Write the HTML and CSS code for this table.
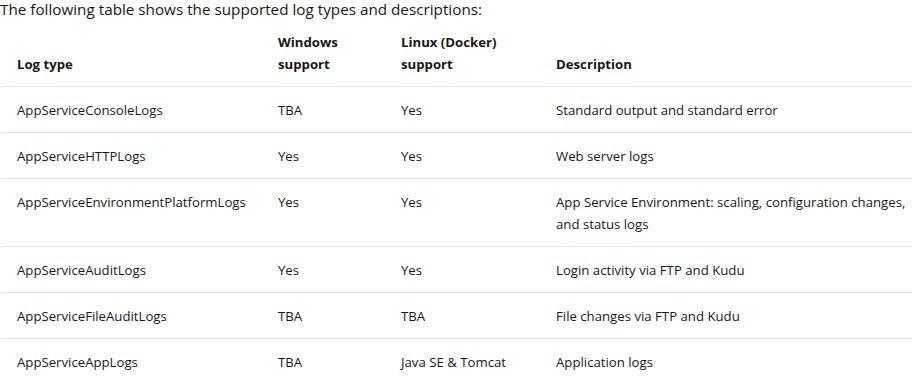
FILE: index.html
```html
<!DOCTYPE html>
<html lang="en">
<head>
    <meta charset="UTF-8">
    <meta name="viewport" content="width=device-width, initial-scale=1.0">
    <title>Log types</title>
    <link rel="stylesheet" href="styles.css">
</head>
<body>
    <p class="intro">The following table shows the supported log types and descriptions:</p>
    <table class="log-table">
        <colgroup>
            <col class="col-type">
            <col class="col-win">
            <col class="col-linux">
            <col class="col-desc">
        </colgroup>
        <thead>
            <tr>
                <th>Log type</th>
                <th>Windows support</th>
                <th>Linux (Docker) support</th>
                <th>Description</th>
            </tr>
        </thead>
        <tbody>
            <tr>
                <td>AppServiceConsoleLogs</td>
                <td>TBA</td>
                <td>Yes</td>
                <td>Standard output and standard error</td>
            </tr>
            <tr>
                <td>AppServiceHTTPLogs</td>
                <td>Yes</td>
                <td>Yes</td>
                <td>Web server logs</td>
            </tr>
            <tr>
                <td>AppServiceEnvironmentPlatformLogs</td>
                <td>Yes</td>
                <td>Yes</td>
                <td>App Service Environment: scaling, configuration changes, and status logs</td>
            </tr>
            <tr>
                <td>AppServiceAuditLogs</td>
                <td>Yes</td>
                <td>Yes</td>
                <td>Login activity via FTP and Kudu</td>
            </tr>
            <tr>
                <td>AppServiceFileAuditLogs</td>
                <td>TBA</td>
                <td>TBA</td>
                <td>File changes via FTP and Kudu</td>
            </tr>
            <tr>
                <td>AppServiceAppLogs</td>
                <td>TBA</td>
                <td>Java SE &amp; Tomcat</td>
                <td>Application logs</td>
            </tr>
        </tbody>
    </table>
</body>
</html>
```

FILE: styles.css
```css
body {
    font-family: "Segoe UI", "Open Sans", "Noto Sans", sans-serif;
    margin: 0;
    color: #171717;
    background-color: white;
    overflow: hidden;
}
.intro {
    margin: 0;
    font-size: 15.25px;
    line-height: 19px;
}
.log-table {
    table-layout: fixed;
    border-collapse: collapse;
    width: calc(100% - 1px);
    margin-left: 1px;
    font-size: 13.2px;
    line-height: 22px;
}
.col-type {
    width: 261px;
}
.col-win {
    width: 123px;
}
.col-linux {
    width: 155px;
}
th {
    font-weight: 700;
    text-align: left;
    vertical-align: bottom;
    padding: 12px 16px 11px;
    border-bottom: 1px solid #e3e3e3;
}
td {
    vertical-align: top;
    padding: 12px 16px 11px;
    border-bottom: 1px solid #e3e3e3;
}
tbody tr:last-child td {
    border-bottom: none;
}
td:last-child,
th:last-child {
    padding-right: 0;
}
```
